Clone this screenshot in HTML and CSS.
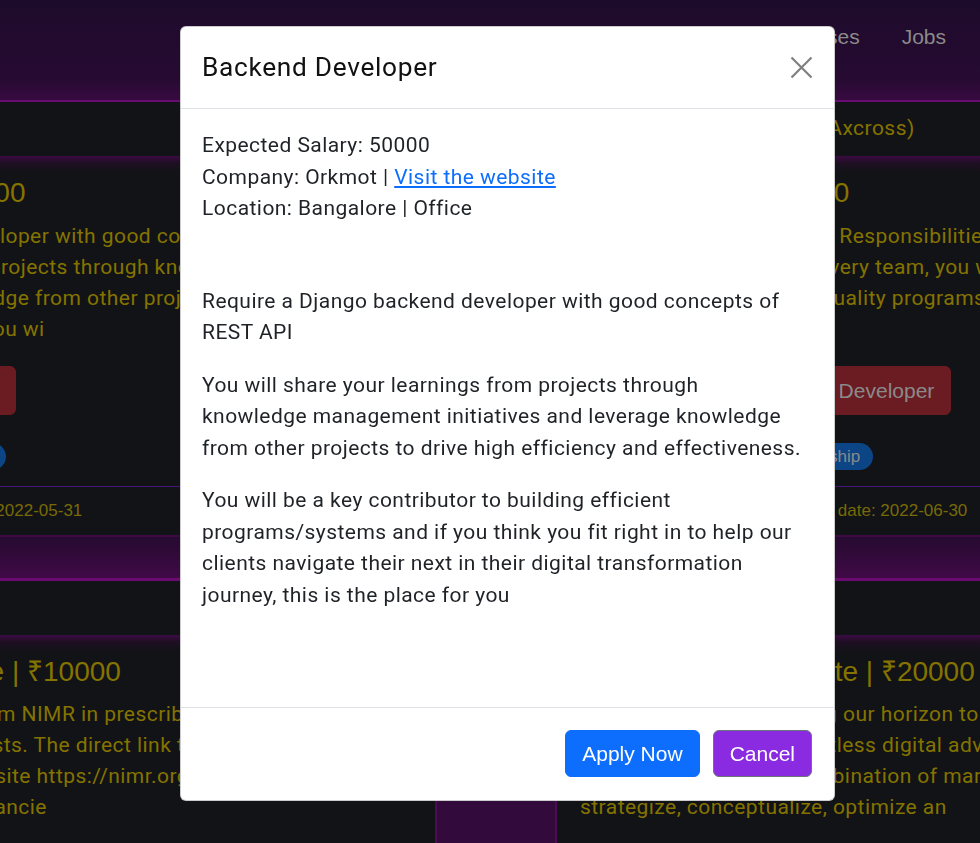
FILE: index.html
```html
<!DOCTYPE html>
<html lang="en">
<head>
<meta charset="utf-8">
<title>Jobs</title>
<link rel="stylesheet" href="styles.css">
</head>
<body>
<header class="navbar">
  <nav class="nav">
    <a class="nav-link" href="#">Home</a>
    <a class="nav-link" href="#">About</a>
    <a class="nav-link" href="#">Courses</a>
    <a class="nav-link" href="#">Jobs</a>
  </nav>
</header>

<main class="jobs">
  <section class="job-row">
    <article class="card">
      <div class="card-header">Orkmot (Bangalore)</div>
      <div class="card-body">
        <h3 class="job-title">Back-end | Office | ₹50000</h3>
        <p class="job-desc">Require a Django backend developer with good concepts of REST API You<br>will share your learnings from projects through knowledge management<br>initiatives and leverage knowledge from other projects to drive high<br>efficiency and effectiveness. You wi</p>
        <a class="btn-job" href="#">Apply as a Backend Developer</a>
        <div class="tags"><span class="tag">Full Time</span><span class="tag">Bangalore</span><span class="tag">Internship</span></div>
      </div>
      <div class="card-footer"><span>Posted on: 2022-05-01</span><span>Last date: 2022-05-31</span></div>
    </article>
    <div class="col-sep"></div>
    <article class="card">
      <div class="card-header">Axtech Software Pvt Ltd (Axcross)</div>
      <div class="card-body">
        <h3 class="job-title">Cloud Intern | ₹30000</h3>
        <p class="job-desc">Product Overview and Key Responsibilities: As a member of our<br>software and product delivery team, you will work with<br>our clients to deliver top quality programs and<br>services.</p>
        <a class="btn-job" href="#">Apply for Junior Frontend Developer</a>
        <div class="tags"><span class="tag">Full Time</span><span class="tag">Remote</span><span class="tag">Internship</span></div>
      </div>
      <div class="card-footer"><span>Posted on: 2022-05-10</span><span>Last date: 2022-06-30</span></div>
    </article>
  </section>

  <div class="row-sep"></div>

  <section class="job-row">
    <article class="card">
      <div class="card-header">NIMR (Chennai)</div>
      <div class="card-body">
        <h3 class="job-title">Field Associate | Remote | ₹10000</h3>
        <p class="job-desc">The applications are invited from NIMR in prescribed format for the<br>temporary research &amp; allied posts. The direct link to apply is<br>is available on this official website https://nimr.org.in under<br>the careers section for any vacancie</p>
        <a class="btn-job" href="#">Apply for Field Associate</a>
        <div class="tags"><span class="tag">Contract</span><span class="tag">Remote</span></div>
      </div>
      <div class="card-footer"><span>Posted on: 2022-05-12</span><span>Last date: 2022-06-15</span></div>
    </article>
    <div class="col-sep"></div>
    <article class="card">
      <div class="card-header">Digital Wave (Pune)</div>
      <div class="card-body">
        <h3 class="job-title">SEO Analyst | Remote | ₹20000</h3>
        <p class="job-desc">We are a studio expanding our horizon to reach more brands<br>and so far, delivered countless digital advertising campaigns<br>built on truly creative combination of marketing expertise to<br>strategize, conceptualize, optimize an</p>
        <a class="btn-job" href="#">Apply for SEO Analyst</a>
        <div class="tags"><span class="tag">Part Time</span><span class="tag">Remote</span></div>
      </div>
      <div class="card-footer"><span>Posted on: 2022-05-20</span><span>Last date: 2022-06-25</span></div>
    </article>
  </section>
</main>

<div class="modal" role="dialog" aria-labelledby="modal-title">
  <div class="modal-header">
    <h5 class="modal-title" id="modal-title">Backend Developer</h5>
    <button class="btn-close" type="button" aria-label="Close">
      <svg width="23" height="23" viewBox="0 0 23 23" aria-hidden="true"><path d="M1.5 1.5L21.5 21.5M21.5 1.5L1.5 21.5" stroke="#000" stroke-width="2.2" stroke-opacity="0.5" fill="none"/></svg>
    </button>
  </div>
  <div class="modal-body">
    <p class="meta">Expected Salary: 50000<br>Company: Orkmot | <a class="link" href="#">Visit the website</a><br>Location: Bangalore | Office</p>
    <p>Require a Django backend developer with good concepts of<br>REST API</p>
    <p>You will share your learnings from projects through<br>knowledge management initiatives and leverage knowledge<br>from other projects to drive high efficiency and effectiveness.</p>
    <p>You will be a key contributor to building efficient<br>programs/systems and if you think you fit right in to help our<br>clients navigate their next in their digital transformation<br>journey, this is the place for you</p>
  </div>
  <div class="modal-footer">
    <button class="btn btn-primary" type="button">Apply Now</button>
    <button class="btn btn-cancel" type="button">Cancel</button>
  </div>
</div>
</body>
</html>
```

FILE: styles.css
```css
html, body {
  margin: 0;
  padding: 0;
}
body {
  background: #121316;
  font-family: Roboto, "Noto Sans", sans-serif;
  font-size: 21px;
  line-height: 1.5;
  letter-spacing: 0.45px;
  height: 843px;
  overflow: hidden;
}

/* ---------- navbar ---------- */
.navbar {
  height: 102px;
  box-sizing: border-box;
  border-bottom: 2px solid #6b0a70;
  background: linear-gradient(180deg, #1d0b2b 0%, #270a32 80%, #350a3e 96%);
  display: flex;
  justify-content: flex-end;
  align-items: flex-start;
  padding: 24px 34px 0 0;
}
.nav {
  display: flex;
  gap: 42px;
}
.nav-link {
  font-family: "Liberation Sans", Arial, sans-serif;
  font-size: 21px;
  line-height: 26px;
  letter-spacing: 0;
  color: #8a8a8a;
  text-decoration: none;
}

/* ---------- job list ---------- */
.jobs {
  margin-left: -328px;
  width: 1643px;
}
.job-row {
  display: grid;
  grid-template-columns: 763px 122px 758px;
}
.card {
  background: #121316;
  display: flex;
  flex-direction: column;
}
.card-header {
  height: 54px;
  padding: 0 23px;
  display: flex;
  align-items: center;
  color: #857300;
  white-space: nowrap;
}
.card-body {
  padding: 20px 23px 16px;
  background: linear-gradient(180deg, #3c0a44 0, #1e0f22 7px, #121316 17px);
}
.job-title {
  margin: 0 0 11px;
  font-family: "Liberation Sans", Arial, "Noto Sans", sans-serif;
  font-weight: 400;
  font-size: 28px;
  line-height: 1.2;
  letter-spacing: 0;
  color: #857300;
  white-space: nowrap;
}
.job-desc {
  margin: 0;
  line-height: 31px;
  color: #857300;
  white-space: nowrap;
}
.btn-job {
  display: inline-block;
  margin-top: 21px;
  padding: 8px 16px;
  border: 1px solid #6b1c22;
  border-radius: 6px;
  background: #6b1c22;
  color: #8a8a8a;
  font-family: "Liberation Sans", Arial, sans-serif;
  font-size: 21px;
  line-height: 31px;
  letter-spacing: 0;
  text-decoration: none;
  white-space: nowrap;
}
.tags {
  display: flex;
  gap: 6px;
  margin-top: 28px;
}
.tag {
  display: inline-block;
  padding: 5px 13px;
  border-radius: 14px;
  background: #0c4585;
  color: #8a8a8a;
  font-family: "Liberation Sans", Arial, sans-serif;
  font-size: 17px;
  line-height: 17px;
  letter-spacing: 0;
  white-space: nowrap;
}
.card-footer {
  height: 48px;
  border-top: 1px solid #45157a;
  padding: 0 23px;
  display: flex;
  align-items: center;
  gap: 48px;
  font-family: "Liberation Sans", Arial, sans-serif;
  font-size: 17px;
  letter-spacing: 0;
  color: #786a06;
  white-space: nowrap;
}
.col-sep {
  background: linear-gradient(180deg, #2a0a34, #3a0a42);
  border-left: 2px solid #4e0a57;
  border-right: 2px solid #4e0a57;
}
.row-sep {
  height: 46px;
  box-sizing: border-box;
  border-top: 2px solid #3e0a46;
  border-bottom: 3px solid #6b0a70;
  background: linear-gradient(180deg, #260a30, #400a47);
}

/* ---------- modal ---------- */
.modal {
  position: fixed;
  top: 26px;
  left: 180px;
  width: 655px;
  box-sizing: border-box;
  background: #fff;
  border: 1px solid rgba(0, 0, 0, 0.2);
  border-radius: 6px;
  color: #1f2226;
  display: flex;
  flex-direction: column;
}
.modal-header {
  display: flex;
  align-items: center;
  justify-content: space-between;
  padding: 21px;
  border-bottom: 1px solid #dee2e6;
}
.modal-title {
  margin: 0;
  font-size: 26.25px;
  font-weight: 400;
  line-height: 1.5;
  letter-spacing: 0.7px;
  color: #111;
}
.btn-close {
  width: 23px;
  height: 23px;
  padding: 0;
  border: 0;
  background: none;
  display: flex;
}
.modal-body {
  box-sizing: border-box;
  min-height: 598px;
  padding: 21px;
}
.modal-body p {
  margin: 0 0 21px;
}
.modal-body .meta {
  margin-bottom: 61px;
}
.link {
  color: #0d6efd;
  text-decoration: underline;
}
.modal-footer {
  display: flex;
  justify-content: flex-end;
  gap: 13px;
  padding: 22px 22px 23px;
  border-top: 1px solid #dee2e6;
}
.btn {
  height: 47px;
  box-sizing: border-box;
  padding: 0 16px;
  border-radius: 6px;
  font-family: "Liberation Sans", Arial, sans-serif;
  font-size: 21px;
  letter-spacing: 0;
  color: #fff;
}
.btn-primary {
  background: #0d6efd;
  border: 1px solid #0d6efd;
}
.btn-cancel {
  background: #8a2be2;
  border: 1px solid #6c757d;
}
```
